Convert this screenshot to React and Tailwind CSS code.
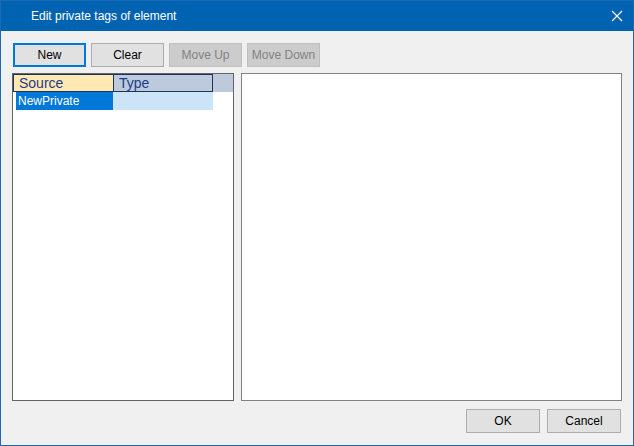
export default function App() {
  const font = { fontFamily: '"Liberation Sans", Arial, sans-serif' };
  return (
    <div
      className="flex h-[446px] w-[634px] flex-col border border-[#1c6bb2] bg-[#f0f0f0]"
      style={font}
    >
      <div className="flex h-[30px] shrink-0 items-center justify-between bg-[#0063b1] pl-[30px] pr-[9px] text-[12px] text-white">
        <span className="pb-[1px]">Edit private tags of element</span>
        <svg width="12" height="12" viewBox="0 0 12 12" className="mr-[1px]">
          <path d="M1 1 L11 11 M11 1 L1 11" stroke="white" strokeWidth="1.2" />
        </svg>
      </div>

      <div className="flex flex-1 flex-col px-[11px] pt-[12px]">
        <div className="flex gap-[5px] pl-[1px] text-[12px]">
          <button className="h-[24px] w-[73px] border-2 border-[#0078d7] bg-[#e1e1e1] text-black">
            New
          </button>
          <button className="h-[24px] w-[73px] border border-[#adadad] bg-[#e1e1e1] text-black">
            Clear
          </button>
          <button className="h-[24px] w-[73px] border border-[#bfbfbf] bg-[#cccccc] text-[#838383]">
            Move Up
          </button>
          <button className="h-[24px] w-[73px] border border-[#bfbfbf] bg-[#cccccc] text-[#838383]">
            Move Down
          </button>
        </div>

        <div className="mt-[6px] flex h-[328px] gap-[7px]">
          <div className="w-[222px] border border-[#646464] bg-white">
            <div className="flex h-[18px] bg-[#bccadb]">
              <div className="flex w-[200px] border border-[#1d3461] text-[14px] leading-[16px] text-[#1e3a8a]">
                <div className="w-[99px] bg-[#ffe9b3] pl-[5px]">Source</div>
                <div className="flex-1 border-l border-[#1d3461] pl-[5px]">Type</div>
              </div>
            </div>
            <div className="flex h-[18px] text-[12px] leading-[18px]">
              <div className="ml-[3px] w-[97px] bg-[#0078d7] pl-[2px] text-white">NewPrivate</div>
              <div className="w-[100px] bg-[#cce4f7]" />
            </div>
          </div>
          <div className="w-[382px] border border-[#828282] bg-white" />
        </div>

        <div className="mt-[8px] flex justify-end gap-[7px] pr-[1px] text-[12px]">
          <button className="h-[24px] w-[74px] border border-[#adadad] bg-[#e1e1e1] text-black">
            OK
          </button>
          <button className="h-[24px] w-[74px] border border-[#adadad] bg-[#e1e1e1] text-black">
            Cancel
          </button>
        </div>
      </div>
    </div>
  );
}
